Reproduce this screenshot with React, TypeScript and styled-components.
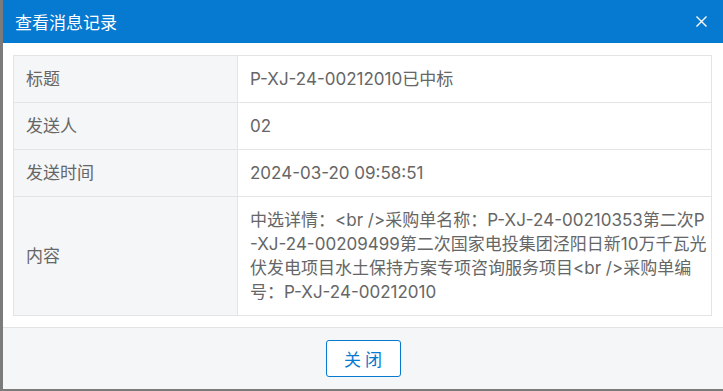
import React from "react";
import styled, { createGlobalStyle } from "styled-components";

const Global = createGlobalStyle`
  html, body { margin: 0; padding: 0; }
  body {
    background: #7b7b7b;
    font-family: "Inter", "Noto Sans CJK SC", sans-serif;
    overflow: hidden;
  }
`;

const Stage = styled.div`
  width: 723px;
  height: 391px;
  display: flex;
  align-items: flex-start;
  padding-left: 3px;
  box-sizing: border-box;
`;

const Modal = styled.div`
  width: 720px;
  height: 389px;
  background: #ffffff;
  display: flex;
  flex-direction: column;
`;

const Header = styled.div`
  height: 43px;
  flex: none;
  background: #0679d0;
  display: flex;
  align-items: center;
  justify-content: space-between;
  padding: 0 16px 0 12px;
`;

const Title = styled.div`
  color: #ffffff;
  font-size: 17px;
  font-family: "Noto Sans CJK SC", sans-serif;
  line-height: 24px;
`;

const CloseBtn = styled.button`
  background: none;
  border: none;
  padding: 0;
  width: 11px;
  height: 11px;
  display: flex;
  cursor: pointer;
`;

const Body = styled.div`
  flex: 1;
  padding: 12px 11px 0 10px;
  border-bottom: 1px solid #e1e2e4;
`;

const Table = styled.table`
  width: 699px;
  border-collapse: collapse;
  table-layout: fixed;
`;

const LabelCell = styled.td`
  width: 224px;
  background: #f5f6f8;
  border: 1px solid #e3e4e6;
  color: #666666;
  font-size: 17px;
  line-height: 24px;
  padding: 11px 12px;
  box-sizing: border-box;
  vertical-align: middle;
`;

const ValueCell = styled.td`
  border: 1px solid #e3e4e6;
  color: #666666;
  font-size: 17px;
  line-height: 24px;
  padding: 11px 0 11px 12px;
  word-break: break-all;
  vertical-align: middle;
`;

const Footer = styled.div`
  height: 61px;
  flex: none;
  background: #f5f6f8;
  display: flex;
  align-items: center;
  justify-content: center;
`;

const Button = styled.button`
  width: 75px;
  height: 37px;
  background: #ffffff;
  border: 1px solid #0679d0;
  border-radius: 3px;
  color: #0679d0;
  font-size: 17px;
  font-family: "Noto Sans CJK SC", sans-serif;
  cursor: pointer;
  padding: 0;
`;

const rows: [string, string][] = [
  ["标题", "P-XJ-24-00212010已中标"],
  ["发送人", "02"],
  ["发送时间", "2024-03-20 09:58:51"],
  [
    "内容",
    "中选详情：<br />采购单名称：P-XJ-24-00210353第二次P-XJ-24-00209499第二次国家电投集团泾阳日新10万千瓦光伏发电项目水土保持方案专项咨询服务项目<br />采购单编号：P-XJ-24-00212010",
  ],
];

export default function App() {
  return (
    <>
      <Global />
      <Stage>
        <Modal>
          <Header>
            <Title>查看消息记录</Title>
            <CloseBtn aria-label="关闭">
              <svg width="11" height="11" viewBox="0 0 11 11">
                <path d="M0.5 0.5 L10.5 10.5 M10.5 0.5 L0.5 10.5" stroke="#ffffff" strokeWidth="1.4" fill="none" />
              </svg>
            </CloseBtn>
          </Header>
          <Body>
            <Table>
              <tbody>
                {rows.map(([k, v]) => (
                  <tr key={k}>
                    <LabelCell>{k}</LabelCell>
                    <ValueCell>{v}</ValueCell>
                  </tr>
                ))}
              </tbody>
            </Table>
          </Body>
          <Footer>
            <Button>关 闭</Button>
          </Footer>
        </Modal>
      </Stage>
    </>
  );
}
